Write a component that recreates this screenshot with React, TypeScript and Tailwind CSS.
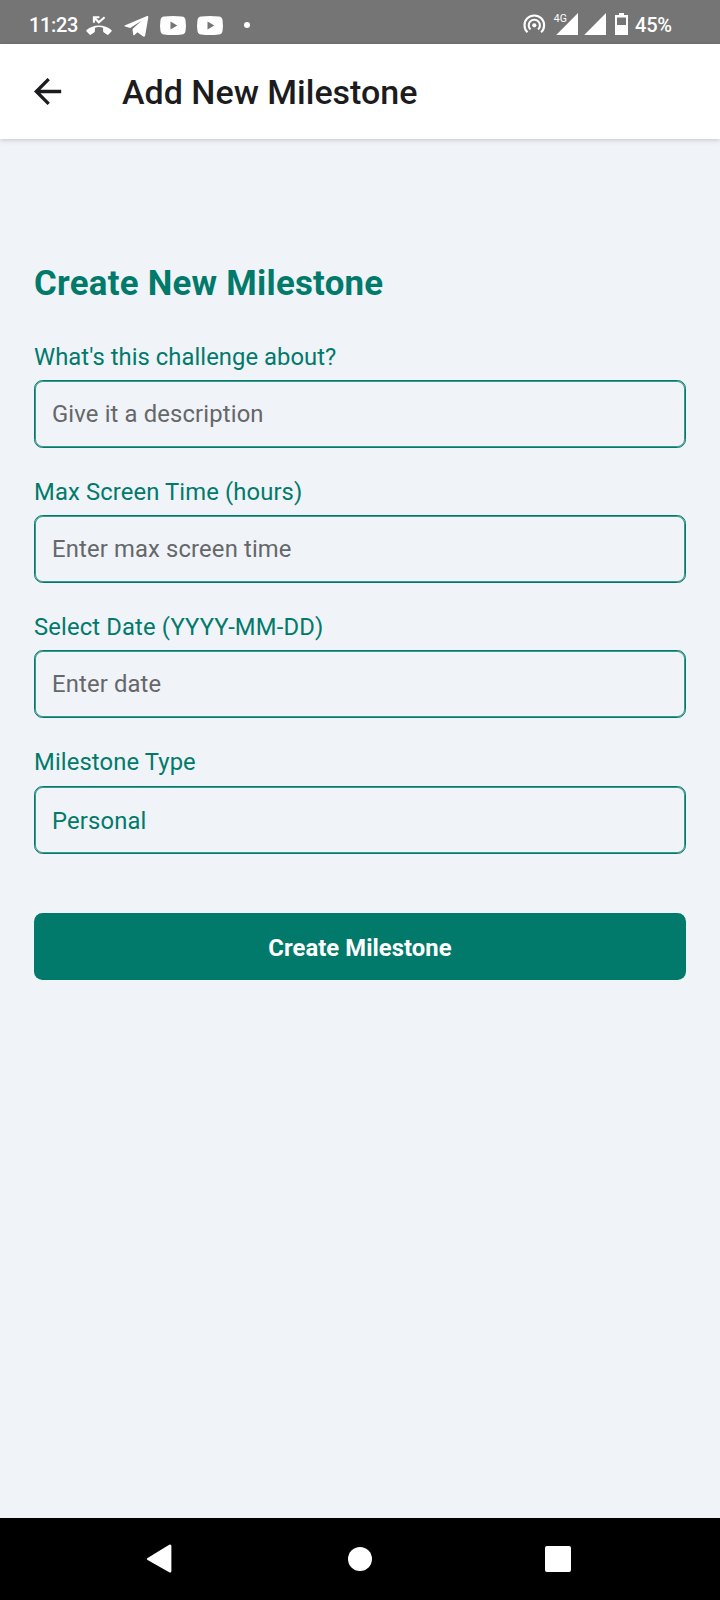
import React from "react";

function StatusBar() {
  return (
    <div className="flex h-[44px] items-center justify-between bg-[#757575] pl-[29px] pr-[49px] text-[20px] font-medium leading-none text-white">
      <div className="flex h-full items-center">
        <span className="w-[55px] pt-[6px] tracking-[-0.35px]">11:23</span>
        <svg width="142" height="44" viewBox="84 0 142 44" fill="white">
          <path d="M99 25.400c-4.700 0-9 1.600-12.400 4.500-.5.500-.5 1.100 0 1.600l2.900 3c.5.500 1.100.5 1.600.1l3.300-2.300c.4-.3.500-.6.500-1v-3.600c2.700-.8 5.500-.8 8.200 0v3.600c0 .4.200.7.500 1l3.300 2.300c.5.400 1.100.4 1.600-.1l2.900-3c.5-.5.500-1.100 0-1.600-3.400-2.900-7.700-4.500-12.400-4.500z" />
          <path d="M93.900 22.800v-5.500h5.500M94.500 17.900l4.300 4.400 5.800-5.100" fill="none" stroke="white" strokeWidth="2.100" />
          <path d="M125.200 25.200 146.500 16.200c1.300-.5 2 .1 1.800 1.400l-3.100 17.600c-.3 1.500-1.100 1.800-2.300 1l-5.500-4-2.800 2.700c-.8.700-1.400.4-1.500-.6l-.6-5.300 9-8.300-11.400 7.300-4.900-1.600c-1.100-.4-1.100-.9 0-1.200z" />
          {[160, 197].map((x) => (
            <g key={x} transform={`translate(${x} 16)`}>
              <path d="M4.200.5Q13-.5 21.800.5 25 .9 25.500 4q.9 5.500 0 11-.5 3.100-3.700 3.500-8.800 1-17.600 0Q1 18.100.5 15q-.9-5.500 0-11Q1 .9 4.200.5z" />
              <path d="M10.500 5.500 17.300 9.500 10.500 13.500z" fill="#757575" />
            </g>
          ))}
        </svg>
        <div className="ml-[18px] mt-[6px] size-[6px] rounded-full bg-white" />
      </div>
      <div className="flex h-full items-center">
        <svg width="108" height="44" viewBox="522 0 108 44" fill="white">
          <g fill="none" stroke="white" strokeWidth="2.1">
            <path d="M527.500 32.300a9.800 9.800 0 1 1 13.600 0" />
            <path d="M530.500 29.400a5.600 5.600 0 1 1 7.600 0" />
          </g>
          <circle cx="534.3" cy="25.300" r="2.100" />
          <path d="M578 13v22h-21.800zM606 13v22h-21.800z" />
          <path d="M619 13h5v2h4v20h-13V15h4z" />
          <path d="M617 17.500h9v7.500h-9z" fill="#757575" />
          <text x="553.800" y="22" fontSize="10.500" className="font-normal">4G</text>
        </svg>
        <span className="ml-[5px] w-[36px] pt-[6px] tracking-[-0.2px]">45%</span>
      </div>
    </div>
  );
}

function Header() {
  return (
    <header className="relative flex h-[95px] items-center bg-white shadow-[0_1px_5px_rgba(0,0,0,0.2)]">
      <svg className="ml-[34px]" width="28" height="28" viewBox="0 0 28 28" fill="none" stroke="#1c1c1e" strokeWidth="3.300">
        <path d="M27.200 13.500H2.500M14.700 1.100 2.300 13.500l12.400 12.400" />
      </svg>
      <h1 className="ml-[60px] text-[34px] font-medium leading-none text-[#1c1c1e]">Add New Milestone</h1>
    </header>
  );
}

type FieldProps = { label: string; labelClass?: string; placeholder?: string; value?: string };

function Field({ label, labelClass = "tracking-[0.12px]", placeholder, value }: FieldProps) {
  return (
    <label className="flex flex-col text-[23.8px] text-[#027a6b]">
      <span className={`h-[40px] pt-[0.75px] leading-[32px] ${labelClass}`}>{label}</span>
      <input
        className={`h-[68px] w-full rounded-[8.500px] border border-[#027a6b] bg-transparent px-[17px] tracking-[0.15px] shadow-[inset_0_0_0_1px_rgba(2,122,107,0.75)] outline-none placeholder:text-[#656769] ${value ? "pt-[2px]" : ""}`}
        placeholder={placeholder}
        defaultValue={value}
      />
    </label>
  );
}

export default function App() {
  return (
    <div className="flex h-[1600px] w-[720px] flex-col overflow-hidden bg-[#f0f3f8] font-['Roboto',sans-serif]">
      <StatusBar />
      <Header />
      <main className="flex flex-1 flex-col px-[34px] pt-[123px]">
        <h2 className="pt-[2px] text-[34.8px] font-bold leading-[38px] tracking-[0.26px] text-[#027a6b]">
          Create New Milestone
        </h2>
        <div className="mt-[37.800px] flex flex-col gap-[27.300px]">
          <Field label="What's this challenge about?" labelClass="tracking-[0.05px]" placeholder="Give it a description" />
          <Field label="Max Screen Time (hours)" placeholder="Enter max screen time" />
          <Field label="Select Date (YYYY-MM-DD)" labelClass="tracking-[0.14px]" placeholder="Enter date" />
          <Field label="Milestone Type" value="Personal" />
        </div>
        <button className="mt-[59.200px] h-[67px] rounded-[8.500px] bg-[#027a6b] pt-[4px] text-[23.8px] font-bold tracking-[0.06px] text-white">
          Create Milestone
        </button>
      </main>
      <nav className="flex h-[82px] items-center justify-between bg-black pl-[146px] pr-[149px]">
        <svg width="26" height="30" viewBox="0 0 26 30" fill="white">
          <path d="M1.600 14 23.200.7Q25.300-.1 25.400 2v25q-.1 2.200-2.200 1.300L1.600 16Q.2 15 1.600 14z" />
        </svg>
        <div className="ml-[3px] size-[24px] rounded-full bg-white" />
        <div className="size-[26px] rounded-[2px] bg-white" />
      </nav>
    </div>
  );
}
